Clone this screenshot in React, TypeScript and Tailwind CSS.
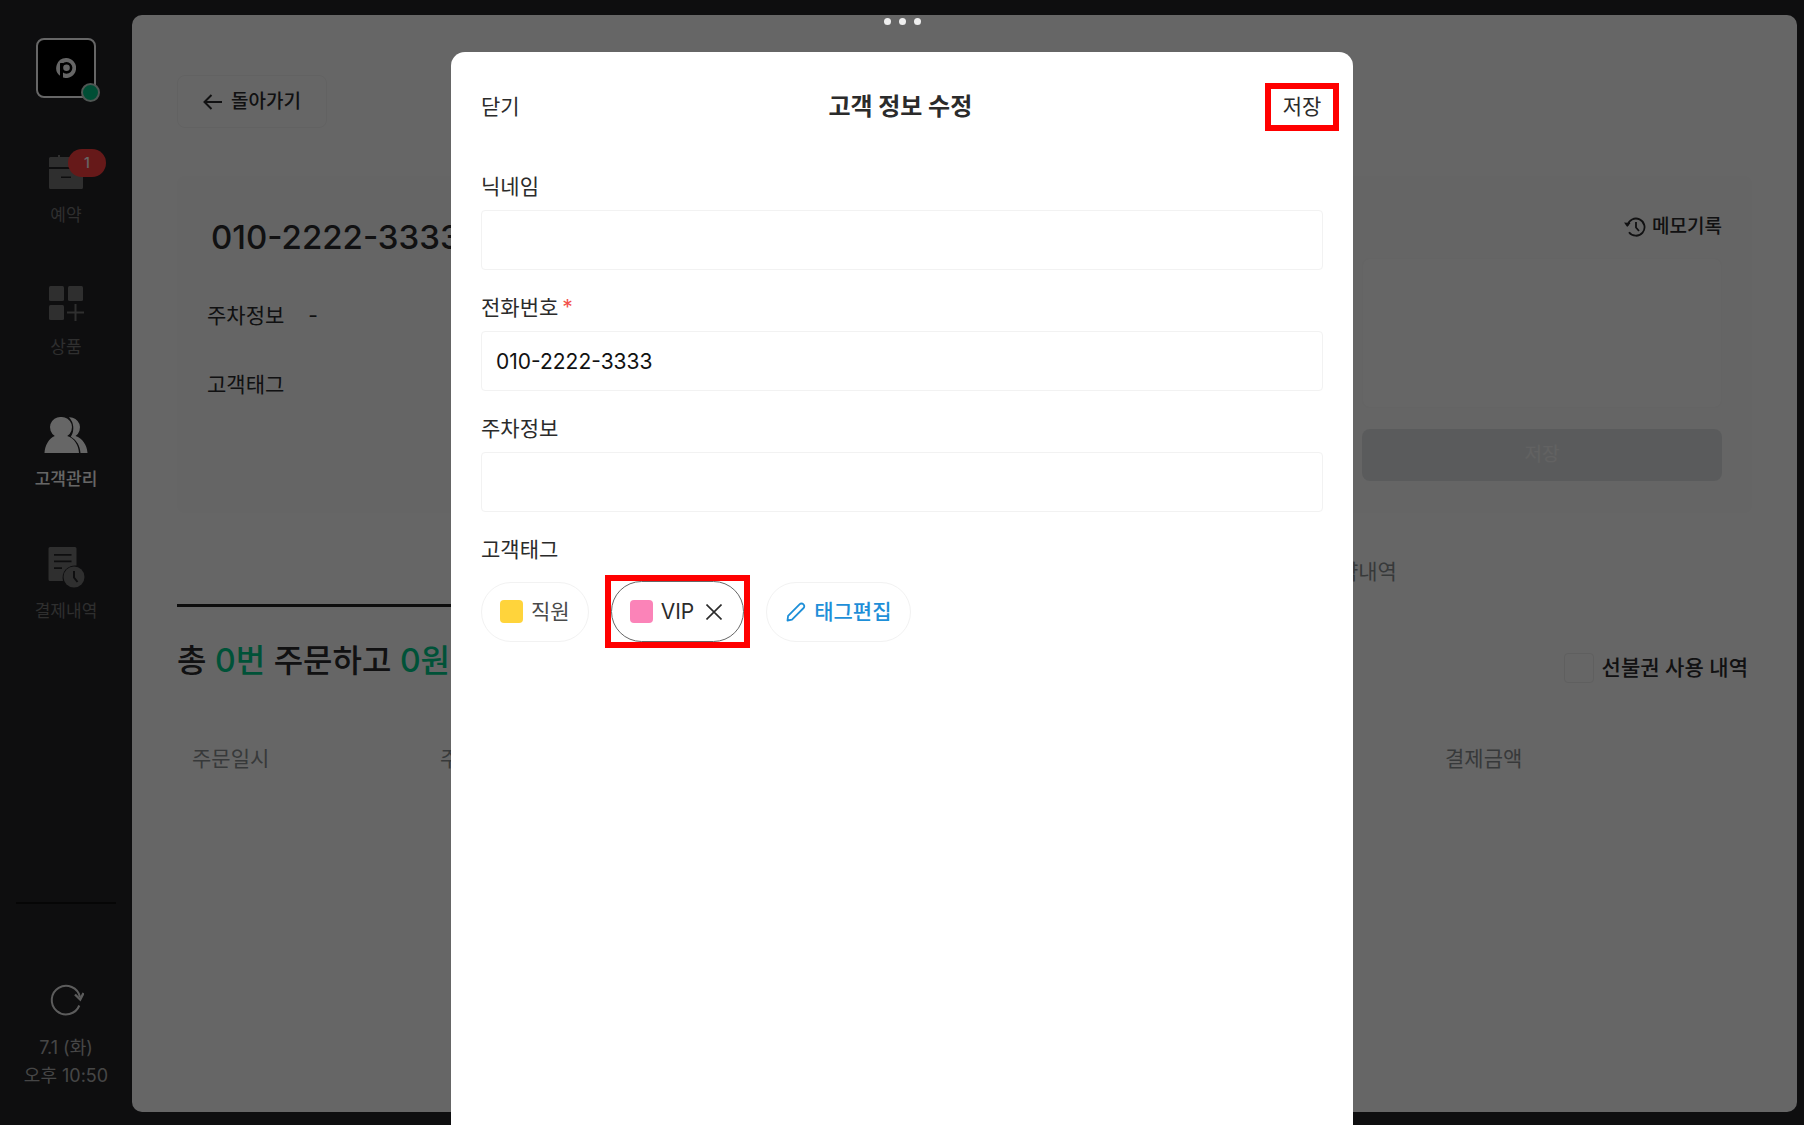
import { ReactNode, useState } from "react";
import clsx from "clsx";

function LogoIcon() {
    return (
        <svg width="20" height="20" viewBox="0 0 20 20" fill="none">
            <path d="M10 0a10 10 0 1 1 -3 19.5V5.5H4V17.8A10 10 0 0 1 10 0Z" fill="#fff" />
            <circle cx="10.5" cy="9.8" r="4.6" stroke="#000" strokeWidth="2.6" />
            <path d="M4.2 5h2.8v14.3l-2.8-1.5Z" fill="#000" />
        </svg>
    );
}

function ReservationIcon() {
    return (
        <svg width="36" height="36" viewBox="0 0 36 36" fill="currentColor">
            <path d="M1 5.5Q1 4 2.500 4H10V2h2v2h12V2h2v2h7.500Q35 4 35 5.500V14H1Z" />
            <path d="M1 16h34v18.500q0 1.500-1.500 1.500h-31Q1 36 1 34.500ZM13 23.500v1.500h10v-1.500Z" fillRule="evenodd" />
        </svg>
    );
}

function ProductIcon() {
    return (
        <svg width="36" height="36" viewBox="0 0 36 36" fill="currentColor">
            <rect x="1" y="1" width="15" height="15" rx="1.5" />
            <rect x="20" y="1" width="15" height="15" rx="1.5" />
            <rect x="1" y="20" width="15" height="15" rx="1.5" />
            <path d="M26.500 19h2v7.500H36v2h-7.500V36h-2v-7.500H19v-2h7.500Z" />
        </svg>
    );
}

function CustomerIcon() {
    return (
        <svg width="44" height="38" viewBox="0 0 44 38" fill="currentColor">
            <path d="M25 1.200A10.300 10.300 0 0 1 31.500 20C38.500 22.500 43 29 43.500 37H36.500C36 30 33 24.500 26.800 20.800A16 16 0 0 0 25 1.200Z" />
            <path d="M17 1a10.300 10.300 0 0 1 6.200 19C30.500 22.500 34.500 29 35 37H.5C1 29 5 22.500 10.800 20A10.300 10.300 0 0 1 17 1Z" />
        </svg>
    );
}

function PaymentIcon() {
    return (
        <svg width="38" height="42" viewBox="0 0 38 42" fill="currentColor">
            <path
                d="M3 1h25q1.500 0 1.500 1.500V19.500A12.300 12.300 0 0 0 16 35H3q-1.500 0-1.500-1.500v-31Q1.500 1 3 1ZM7 8v1.800h17.500V8ZM7 14.500v1.800h17.500v-1.800ZM7 21.200V23h8v-1.800Z"
                fillRule="evenodd"
            />
            <circle cx="27" cy="31" r="10.5" />
            <path d="M27 25v6.500l3.500 4.500" fill="none" stroke="#232326" strokeWidth="2" />
        </svg>
    );
}

function RefreshIcon() {
    return (
        <svg width="36" height="36" viewBox="0 0 36 36" fill="none" stroke="currentColor" strokeWidth="2">
            <path d="M31.300 23.500A14.300 14.300 0 1 1 32 15" />
            <path d="M27 12.500l5.200 5 3.300-6.500" strokeWidth="2.4" />
        </svg>
    );
}

function HistoryIcon() {
    return (
        <svg width="22" height="20" viewBox="0 0 22 20" fill="none" stroke="currentColor" strokeWidth="1.8">
            <path d="M3.500 8.500A8.600 8.600 0 1 1 5 15.200" />
            <path d="M12 5v5.500l3 3.500" />
            <path d="M0 5.500l6.500.5-3.300 4Z" fill="currentColor" stroke="none" />
        </svg>
    );
}

function ArrowIcon() {
    return (
        <svg width="20" height="16" viewBox="0 0 20 16" fill="none" stroke="currentColor" strokeWidth="2">
            <path d="M19 8H2M8.500 1L1.500 8l7 7" />
        </svg>
    );
}

function CloseIcon() {
    return (
        <svg width="16" height="16" viewBox="0 0 16 16" fill="none" stroke="currentColor" strokeWidth="1.6">
            <path d="M.5.5l15 15M15.500.5l-15 15" />
        </svg>
    );
}

function PencilIcon() {
    return (
        <svg width="20" height="20" viewBox="0 0 20 20" fill="none" stroke="currentColor" strokeWidth="1.8" strokeLinejoin="round">
            <path d="M1.500 18.500l.6-4.600L13.800 2.200a2.400 2.400 0 0 1 3.400 0l.4.4a2.400 2.400 0 0 1 0 3.400L6 17.700Z" />
        </svg>
    );
}

interface NavItemProps {
    label: string;
    icon: ReactNode;
    active?: boolean;
    badge?: number;
}

function NavItem({ label, icon, active = false, badge }: NavItemProps) {
    return (
        <a
            href="#"
            className={clsx("flex flex-col items-center gap-3", active ? "font-medium text-white" : "text-[#757575]")}
        >
            <span className="relative flex h-10 w-11 items-center justify-center">
                {icon}
                {badge && (
                    <span className="absolute -top-0.5 left-6 flex h-7 w-[38px] items-center justify-center rounded-full bg-[#ff3f3f] text-sm font-medium text-white">
                        {badge}
                    </span>
                )}
            </span>
            <span className="text-[17px] leading-6">{label}</span>
        </a>
    );
}

function Sidebar() {
    return (
        <aside className="flex w-[132px] shrink-0 flex-col items-center pt-[38px] pb-[35px]">
            <div className="relative flex size-[60px] items-center justify-center rounded-lg border-2 border-white bg-black">
                <LogoIcon />
                <span className="absolute -right-1.5 -bottom-1.5 size-[19px] rounded-full border-2 border-[#c5d6cf] bg-[#00c386]" />
            </div>
            <nav className="mt-[53px] flex flex-col gap-14">
                <NavItem label="예약" icon={<ReservationIcon />} badge={1} />
                <NavItem label="상품" icon={<ProductIcon />} />
                <NavItem label="고객관리" icon={<CustomerIcon />} active />
                <NavItem label="결제내역" icon={<PaymentIcon />} />
            </nav>
            <hr className="mt-auto w-[100px] border-t-2 border-[#101010]" />
            <button type="button" aria-label="새로고침" className="mt-[78px] text-[#e5e5e5]">
                <RefreshIcon />
            </button>
            <p className="mt-4 text-center text-[18px] leading-7 text-[#b0b0b0]">
                7.1 (화)
                <br />
                오후 10:50
            </p>
        </aside>
    );
}

function CustomerPage() {
    return (
        <main className="mt-[15px] mr-[7px] mb-[13px] flex-1 rounded-[10px] bg-white px-[45px] pt-[60px] text-[21px] leading-[30px] text-[#2b2b2d]">
            <button
                type="button"
                className="flex h-[53px] w-[150px] items-center justify-center gap-2 rounded-lg border border-[#f5f5f5] text-[19px] font-medium"
            >
                <ArrowIcon />
                돌아가기
            </button>

            <section className="mt-12 flex justify-between rounded-lg bg-[#fcfcfc] px-[30px] py-8">
                <div className="pt-2">
                    <h1 className="pl-1 text-[33px] leading-[42px] font-medium">010-2222-3333</h1>
                    <dl className="mt-[43px] grid grid-cols-[auto_1fr] gap-x-6 gap-y-[39px]">
                        <dt>주차정보</dt>
                        <dd>-</dd>
                        <dt>고객태그</dt>
                        <dd></dd>
                    </dl>
                </div>
                <div className="flex w-[360px] flex-col">
                    <button type="button" className="flex items-center gap-1.5 self-end pt-1 text-[19px] font-medium">
                        <HistoryIcon />
                        메모기록
                    </button>
                    <textarea
                        aria-label="메모"
                        className="mt-4 h-[150px] resize-none rounded-lg border border-[#f9f9f9] bg-white p-4"
                    />
                    <button
                        type="button"
                        disabled
                        className="mt-[21px] h-[52px] rounded-lg bg-[#e2e4e6] text-[19px] text-[#f5f5f5]"
                    >
                        저장
                    </button>
                </div>
            </section>

            <div className="mt-6 flex" role="tablist">
                <button type="button" role="tab" aria-selected="true" className="h-[70px] flex-1 border-b-[3px] border-[#222] font-medium">
                    주문내역
                </button>
                <button type="button" role="tab" aria-selected="false" className="h-[70px] flex-1 text-[#8b8f92]">
                    예약내역
                </button>
            </div>

            <div className="mt-8 flex items-center justify-between">
                <h2 className="text-[32px] leading-[42px] font-medium">
                    총 <span className="text-[#00cd8c]">0번</span> 주문하고 <span className="text-[#00cd8c]">0원</span> 결제했어요
                </h2>
                <label className="flex items-center gap-2 pt-3.5 pr-1 font-medium">
                    <input type="checkbox" className="size-[30px] appearance-none rounded-sm border border-[#eee] bg-white" />
                    선불권 사용 내역
                </label>
            </div>

            <table className="mt-[61px] w-full table-fixed text-left text-[#8b8f92]">
                <thead>
                    <tr>
                        <th className="w-[248px] px-[15px] font-normal">주문일시</th>
                        <th className="px-[15px] font-normal">주문내용</th>
                        <th className="w-[322px] px-[15px] font-normal">결제금액</th>
                    </tr>
                </thead>
            </table>
        </main>
    );
}

interface FieldProps {
    id: string;
    label: string;
    required?: boolean;
    defaultValue?: string;
}

function Field({ id, label, required = false, defaultValue = "" }: FieldProps) {
    return (
        <div className="flex flex-col gap-2">
            <label htmlFor={id}>
                {label}
                {required && <span className="ml-1 text-[#f2504b]">*</span>}
            </label>
            <input
                id={id}
                type="text"
                defaultValue={defaultValue}
                className="h-[60px] w-full rounded-sm border border-[#f2f2f2] bg-white px-3.5 text-[21px] text-[#111]"
            />
        </div>
    );
}

function EditCustomerModal() {
    const [vip, setVip] = useState(true);

    return (
        <div className="fixed inset-0 flex justify-center bg-black/60 pt-[52px]">
            <div className="absolute top-[18px] flex gap-2">
                <span className="size-[7px] rounded-full bg-[#eee]" />
                <span className="size-[7px] rounded-full bg-[#eee]" />
                <span className="size-[7px] rounded-full bg-[#eee]" />
            </div>

            <div
                role="dialog"
                aria-label="고객 정보 수정"
                className="w-1/2 rounded-t-[14px] bg-white pt-[31px] text-[21px] leading-[30px] text-[#2b2b2b]"
            >
                <header className="flex items-center justify-between px-3.5">
                    <button type="button" className="h-12 px-4">
                        닫기
                    </button>
                    <h2 className="text-2xl font-bold">고객 정보 수정</h2>
                    <button type="button" className="flex h-12 w-[74px] items-center justify-center border-6 border-[#ff0000]">
                        저장
                    </button>
                </header>

                <form className="mt-[41px] flex flex-col gap-[23px] px-[30px]">
                    <Field id="nickname" label="닉네임" />
                    <Field id="phone" label="전화번호" required defaultValue="010-2222-3333" />
                    <Field id="parking" label="주차정보" />

                    <fieldset>
                        <legend>고객태그</legend>
                        <div className="mt-2.5 flex items-center gap-4">
                            <button
                                type="button"
                                className="flex h-[60px] items-center gap-2 rounded-full border border-[#f2f2f2] px-[18px] text-[#4a4a4a]"
                            >
                                <span className="size-[23px] rounded-sm bg-[#ffd43b]" />
                                직원
                            </button>
                            <div className="border-6 border-[#ff0000]">
                                <button
                                    type="button"
                                    aria-pressed={vip}
                                    onClick={() => setVip(!vip)}
                                    className="flex h-[61px] items-center gap-2 rounded-full border border-[#666] pr-[21px] pl-[18px]"
                                >
                                    <span className="size-[23px] rounded-sm bg-[#fb83b8]" />
                                    <span className="mr-1">VIP</span>
                                    <CloseIcon />
                                </button>
                            </div>
                            <button
                                type="button"
                                className="flex h-[60px] items-center gap-2 rounded-full border border-[#f2f2f2] px-[19px] font-medium text-[#1e8fd8]"
                            >
                                <PencilIcon />
                                태그편집
                            </button>
                        </div>
                    </fieldset>
                </form>
            </div>
        </div>
    );
}

function App() {
    return (
        <div className="flex min-h-screen bg-[#232326] font-[Inter,'Noto_Sans_CJK_KR',sans-serif]">
            <Sidebar />
            <CustomerPage />
            <EditCustomerModal />
        </div>
    );
}

export default App;
